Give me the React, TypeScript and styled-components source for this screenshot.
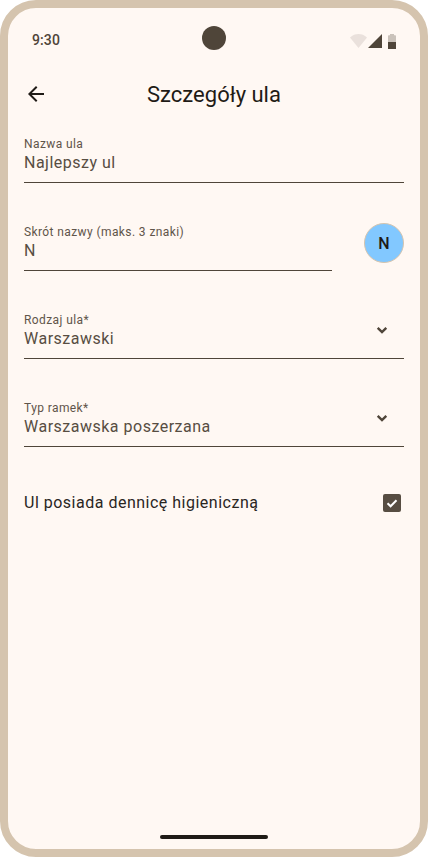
import styled, {createGlobalStyle} from 'styled-components';

const GlobalStyle = createGlobalStyle`
   * {
      box-sizing: border-box;
   }
   html, body {
      margin: 0;
      padding: 0;
      background: #fff;
   }
   body {
      font-family: 'Roboto', 'Liberation Sans', sans-serif;
   }
`;

const Frame = styled.div`
   width: 428px;
   height: 857px;
   display: flex;
   flex-direction: column;
   overflow: hidden;
   border: 8px solid #d5c4ae;
   border-radius: 36px;
   background: #fff8f3;
`;
const StatusBar = styled.div`
   height: 54px;
   flex: none;
   display: grid;
   grid-template-columns: 1fr 24px 1fr;
   align-items: start;
   padding: 18px 24px 0;
`;
const Time = styled.span`
   font-size: 14px;
   font-weight: 500;
   line-height: 28px;
   letter-spacing: 0.1px;
   color: #4f4539;
`;
const Camera = styled.div`
   width: 24px;
   height: 24px;
   border-radius: 50%;
   background: #4f4539;
`;
const StatusIcons = styled.div`
   display: flex;
   justify-content: flex-end;
   padding-top: 8px;
`;
const AppBar = styled.header`
   height: 64px;
   flex: none;
   display: grid;
   grid-template-columns: 56px 1fr 56px;
   align-items: center;
   padding: 0 4px;
`;
const BackButton = styled.button`
   width: 48px;
   height: 48px;
   padding: 0;
   border: 0;
   display: flex;
   justify-content: center;
   align-items: center;
   background: none;
   color: #1f1b16;
`;
const Title = styled.h1`
   margin: 1px 0 0;
   text-align: center;
   font-size: 22px;
   font-weight: 400;
   line-height: 28px;
   color: #1f1b16;
`;
const Form = styled.main`
   flex: 1 1 auto;
   display: flex;
   flex-direction: column;
   gap: 32px;
   padding: 1px 16px 0;
`;
const Row = styled.div`
   display: flex;
   align-items: center;
   gap: 32px;
`;
const Field = styled.div`
   flex: none;
   height: 56px;
   display: flex;
   align-items: center;
   justify-content: space-between;
   border-bottom: 1px solid #4f4539;
`;
const ShortField = styled(Field)`
   flex: 1 1 auto;
`;
const FieldText = styled.div`
   display: flex;
   flex-direction: column;
`;
const Label = styled.span`
   font-size: 12px;
   line-height: 16px;
   letter-spacing: 0.4px;
   color: #5f554a;
`;
const Value = styled.span`
   font-size: 16px;
   line-height: 22px;
   letter-spacing: 0.5px;
   color: #574d42;
`;
const Avatar = styled.div`
   width: 40px;
   height: 40px;
   flex: none;
   display: flex;
   justify-content: center;
   align-items: center;
   border: 1px solid #d5c4ae;
   border-radius: 50%;
   background: #82c8ff;
   font-size: 16px;
   font-weight: 500;
   color: #1f1b16;
`;
const Chevron = styled.svg`
   flex: none;
   margin-right: 10px;
   margin-bottom: 2px;
   color: #4f4539;
`;
const CheckRow = styled.div`
   display: flex;
   justify-content: space-between;
   align-items: center;
   height: 24px;
   margin-top: 12px;
   padding-right: 3px;
`;
const CheckLabel = styled.span`
   font-size: 16px;
   line-height: 24px;
   letter-spacing: 0.5px;
   color: #2a261f;
`;
const Checkbox = styled.span`
   width: 18px;
   height: 18px;
   display: flex;
   justify-content: center;
   align-items: center;
   border-radius: 2px;
   background: #574d42;
`;
const HomeArea = styled.div`
   height: 24px;
   flex: none;
   display: flex;
   justify-content: center;
   padding-top: 10px;
`;
const HomeBar = styled.div`
   width: 108px;
   height: 4px;
   border-radius: 2px;
   background: #1f1b16;
`;

const ChevronDown = () => (
   <Chevron width='24' height='24' viewBox='0 0 24 24' fill='none'>
      <path d='M7.700 9.800 12 14.100l4.300-4.300' stroke='currentColor' strokeWidth='2.400' />
   </Chevron>
);

const App = () => (
   <>
      <GlobalStyle />
      <Frame>
         <StatusBar>
            <Time>9:30</Time>
            <Camera />
            <StatusIcons>
               <svg width='46' height='15' viewBox='0 0 46 15'>
                  <path d='M0 3.500C2.500 1 5.500 0 8.500 0s6 1 8.500 3.500L8.500 14z' fill='#4f4539' opacity='0.12' />
                  <path d='M32 0v14H18z' fill='#4f4539' />
                  <path d='M38 8V2q0-.7.7-.7h1.300V0h4v1.300h1.300q.7 0 .7.700v6z' fill='#4f4539' opacity='0.3' />
                  <rect x='38' y='8' width='8' height='7' fill='#4f4539' />
               </svg>
            </StatusIcons>
         </StatusBar>
         <AppBar>
            <BackButton type='button' aria-label='Wstecz'>
               <svg width='24' height='24' viewBox='0 0 24 24' fill='currentColor'>
                  <path d='M20 11H7.830l5.590-5.590L12 4l-8 8 8 8 1.410-1.410L7.830 13H20z' />
               </svg>
            </BackButton>
            <Title>Szczegóły ula</Title>
         </AppBar>
         <Form>
            <Field>
               <FieldText>
                  <Label>Nazwa ula</Label>
                  <Value>Najlepszy ul</Value>
               </FieldText>
            </Field>
            <Row>
               <ShortField>
                  <FieldText>
                     <Label>Skrót nazwy (maks. 3 znaki)</Label>
                     <Value>N</Value>
                  </FieldText>
               </ShortField>
               <Avatar>N</Avatar>
            </Row>
            <Field>
               <FieldText>
                  <Label>Rodzaj ula*</Label>
                  <Value>Warszawski</Value>
               </FieldText>
               <ChevronDown />
            </Field>
            <Field>
               <FieldText>
                  <Label>Typ ramek*</Label>
                  <Value>Warszawska poszerzana</Value>
               </FieldText>
               <ChevronDown />
            </Field>
            <CheckRow>
               <CheckLabel>Ul posiada dennicę higieniczną</CheckLabel>
               <Checkbox>
                  <svg width='14' height='14' viewBox='0 0 14 14' fill='none'>
                     <path d='M2.500 7.200 5.600 10.300 11.500 4.200' stroke='#fff' strokeWidth='2' />
                  </svg>
               </Checkbox>
            </CheckRow>
         </Form>
         <HomeArea>
            <HomeBar />
         </HomeArea>
      </Frame>
   </>
);
export default App;
